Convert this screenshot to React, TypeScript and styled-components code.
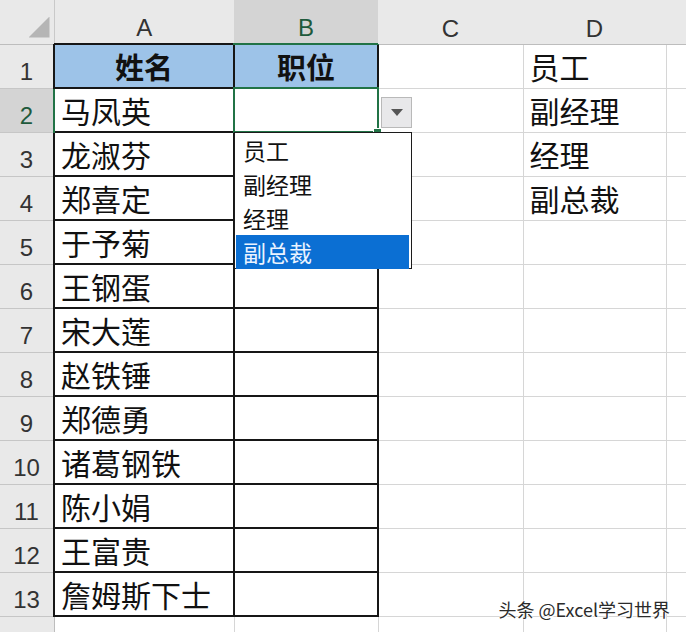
import React from "react";
import styled, { createGlobalStyle, css } from "styled-components";

const GlobalStyle = createGlobalStyle`
  html, body { margin: 0; padding: 0; background: #ffffff; }
  body {
    width: 686px;
    height: 632px;
    overflow: hidden;
    font-family: "Noto Sans CJK SC", "Noto Sans", sans-serif;
  }
`;

const Sheet = styled.div`
  position: relative;
  width: 686px;
  height: 632px;
  overflow: hidden;
  background: #ffffff;
`;

const Grid = styled.table`
  border-collapse: collapse;
  table-layout: fixed;
  width: 726px;
`;

const Row = styled.tr`
  height: 44px;
`;

const headerText = css`
  font-family: "Liberation Sans", Arial, sans-serif;
  font-size: 24px;
  font-weight: 400;
  line-height: 24px;
  vertical-align: bottom;
  padding: 0 0 3px 0;
  text-align: center;
`;

const Corner = styled.th`
  position: relative;
  background: #e9e9e9;
  border-right: 1px solid #c9c9c9;
  border-bottom: 1px solid #bdbdbd;
  padding: 0;
`;

const CornerMark = styled.span`
  position: absolute;
  right: 4px;
  bottom: 6px;
  width: 21px;
  height: 21px;
  background: #b5b5b5;
  clip-path: polygon(100% 0, 100% 100%, 0 100%);
`;

const ColHeader = styled.th<{ $selected?: boolean }>`
  ${headerText};
  position: relative;
  color: ${(p) => (p.$selected ? "#1e5a3c" : "#333333")};
  background: ${(p) => (p.$selected ? "#d4d4d4" : "#e9e9e9")};
  border-bottom: ${(p) => (p.$selected ? "2px solid #217346" : "1px solid #bdbdbd")};
  &::after {
    content: "";
    position: absolute;
    top: 7px;
    bottom: 0;
    right: -1px;
    width: 1px;
    background: #c6c6c6;
  }
`;

const RowHeader = styled.th<{ $selected?: boolean }>`
  ${headerText};
  padding-bottom: 4px;
  color: ${(p) => (p.$selected ? "#1e5a3c" : "#333333")};
  background: ${(p) => (p.$selected ? "#d4d4d4" : "#e9e9e9")};
  border-bottom: 1px solid #c6c6c6;
  border-right: ${(p) => (p.$selected ? "2px solid #217346" : "1px solid #bdbdbd")};
`;

const Cell = styled.td<{ $boxed?: boolean; $head?: boolean }>`
  position: relative;
  padding: 0 6px;
  font-size: 30px;
  line-height: 36px;
  color: #111111;
  white-space: nowrap;
  overflow: visible;
  vertical-align: middle;
  border-right: 1px solid #d6d6d6;
  border-bottom: 1px solid #d6d6d6;
  ${(p) =>
    p.$boxed &&
    css`
      border: 2px solid #161616;
    `}
  ${(p) =>
    p.$head &&
    css`
      background: #9dc3e8;
      font-weight: 700;
      font-size: 29px;
      text-align: center;
    `}
`;

const ActiveFrame = styled.div`
  position: absolute;
  inset: -2px;
  border: 2px solid #217346;
  pointer-events: none;
`;

const FillHandle = styled.span`
  position: absolute;
  right: -5px;
  bottom: -5px;
  width: 7px;
  height: 6px;
  background: #217346;
  border: 1px solid #ffffff;
`;

const DropButton = styled.div`
  position: absolute;
  left: calc(100% + 4px);
  top: 8px;
  width: 31px;
  height: 31px;
  box-sizing: border-box;
  background: #e8e8ea;
  border: 1px solid #b9b9b9;
  display: flex;
  align-items: center;
  justify-content: center;
`;

const DropList = styled.div`
  position: absolute;
  left: -1px;
  top: calc(100% + 1px);
  width: 178px;
  height: 137px;
  box-sizing: border-box;
  background: #ffffff;
  border: 1px solid #1c1c1c;
  padding: 0 2px 1px 1px;
  display: flex;
  flex-direction: column;
  z-index: 2;
`;

const DropItem = styled.div<{ $active?: boolean }>`
  height: 34px;
  line-height: 34px;
  padding-left: 7px;
  font-size: 23px;
  font-weight: 400;
  text-align: left;
  color: ${(p) => (p.$active ? "#eaf3ff" : "#111111")};
  background: ${(p) => (p.$active ? "#0b6fd3" : "transparent")};
`;

const Watermark = styled.div`
  position: absolute;
  right: 16px;
  bottom: 12px;
  font-family: "Noto Sans CJK SC", sans-serif;
  font-size: 18px;
  line-height: 22px;
  color: #2b2b2b;
  text-shadow: 0 0 2px #ffffff, 0 0 2px #ffffff, 1px 1px 0 #ffffff;
  white-space: nowrap;
`;

const names = [
  "马凤英",
  "龙淑芬",
  "郑喜定",
  "于予菊",
  "王钢蛋",
  "宋大莲",
  "赵铁锤",
  "郑德勇",
  "诸葛钢铁",
  "陈小娟",
  "王富贵",
  "詹姆斯下士",
];

const positions = ["员工", "副经理", "经理", "副总裁"];

const colWidths = [54, 180, 144, 145, 143, 60];

export default function App() {
  const rows = [];
  for (let r = 1; r <= 14; r++) {
    const inTable = r <= 13;
    const isHead = r === 1;
    const aText = isHead ? "姓名" : names[r - 2] ?? "";
    const bText = isHead ? "职位" : "";
    const dText = positions[r - 1] ?? "";
    rows.push(
      <Row key={r}>
        <RowHeader $selected={r === 2}>{r <= 13 ? r : ""}</RowHeader>
        <Cell $boxed={inTable} $head={isHead}>
          {aText}
        </Cell>
        <Cell $boxed={inTable} $head={isHead}>
          {bText}
          {r === 2 && (
            <>
              <ActiveFrame>
                <FillHandle />
              </ActiveFrame>
              <DropButton>
                <svg width="12" height="7" viewBox="0 0 12 7">
                  <path d="M0 0 H12 L6 7 Z" fill="#555555" />
                </svg>
              </DropButton>
              <DropList>
                {positions.map((p, i) => (
                  <DropItem key={p} $active={i === 3}>
                    {p}
                  </DropItem>
                ))}
              </DropList>
            </>
          )}
        </Cell>
        <Cell />
        <Cell>{dText}</Cell>
        <Cell />
      </Row>
    );
  }

  return (
    <>
      <GlobalStyle />
      <Sheet>
        <Grid>
          <colgroup>
            {colWidths.map((w, i) => (
              <col key={i} style={{ width: w }} />
            ))}
          </colgroup>
          <thead>
            <Row>
              <Corner>
                <CornerMark />
              </Corner>
              <ColHeader>A</ColHeader>
              <ColHeader $selected>B</ColHeader>
              <ColHeader>C</ColHeader>
              <ColHeader>D</ColHeader>
              <ColHeader />
            </Row>
          </thead>
          <tbody>{rows}</tbody>
        </Grid>
        <Watermark>头条 @Excel学习世界</Watermark>
      </Sheet>
    </>
  );
}
